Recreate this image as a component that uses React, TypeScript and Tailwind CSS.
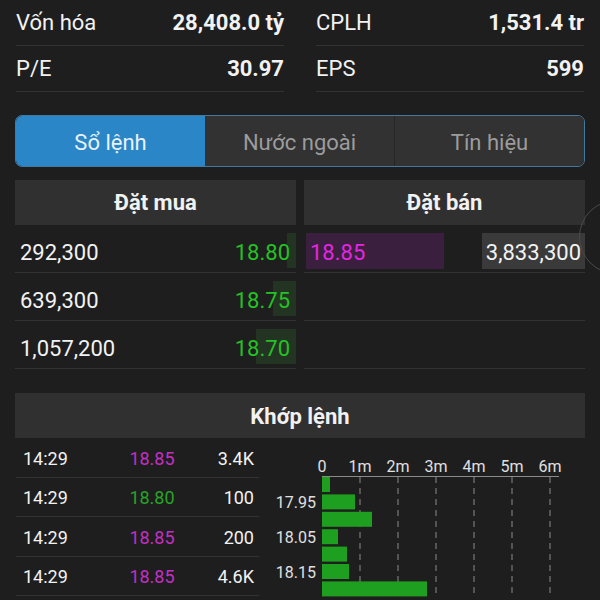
import React from "react";

const STATS = [
  [
    { label: "Vốn hóa", value: "28,408.0 tỷ" },
    { label: "CPLH", value: "1,531.4 tr" },
  ],
  [
    { label: "P/E", value: "30.97" },
    { label: "EPS", value: "599" },
  ],
];

const BUYS = [
  { vol: "292,300", price: "18.80", bar: "w-[9px]" },
  { vol: "639,300", price: "18.75", bar: "w-[23px]" },
  { vol: "1,057,200", price: "18.70", bar: "w-[40px]" },
];

const TRADES = [
  { time: "14:29", price: "18.85", vol: "3.4K", up: true },
  { time: "14:29", price: "18.80", vol: "100", up: false },
  { time: "14:29", price: "18.85", vol: "200", up: true },
  { time: "14:29", price: "18.85", vol: "4.6K", up: true },
];

const BARS = [8, 33, 50, 16, 25, 27, 105, 60];
const TICKS = ["0", "1m", "2m", "3m", "4m", "5m", "6m"];

const VolumeChart = () => (
  <svg width="324" height="160" viewBox="0 0 324 160" className="block">
    {TICKS.map((t, i) => (
      <text
        key={t}
        x={63 + i * 38}
        y={34}
        fill="#e0e0e0"
        fontSize="16"
        textAnchor="middle"
        fontFamily="Roboto, sans-serif"
      >
        {t}
      </text>
    ))}
    <line x1="63" y1="38.5" x2="300" y2="38.5" stroke="#8a8a8a" strokeWidth="1" />
    {TICKS.slice(1).map((t, i) => (
      <line
        key={t}
        x1={101 + i * 38}
        y1="39"
        x2={101 + i * 38}
        y2="160"
        stroke="#8a8a8a"
        strokeWidth="1"
        strokeDasharray="6 5"
      />
    ))}
    {BARS.map((w, i) => (
      <rect key={i} x="63" y={39 + i * 17.4} width={w} height="15" fill="#1f9f1f" />
    ))}
    {["17.95", "18.05", "18.15"].map((l, i) => (
      <text
        key={l}
        x="57"
        y={70 + i * 34.8}
        fill="#e0e0e0"
        fontSize="16"
        textAnchor="end"
        fontFamily="Roboto, sans-serif"
      >
        {l}
      </text>
    ))}
  </svg>
);

const App = () => {
  return (
    <div className="relative w-[600px] h-[600px] overflow-hidden bg-[#1e1e1e] text-[#f2f2f2] font-['Roboto',sans-serif]">
      {/* stats */}
      <section className="flex flex-col px-[16px]">
        {STATS.map((row, r) => (
          <div key={r} className="grid grid-cols-2 gap-x-[32px]">
            {row.map((s) => (
              <div
                key={s.label}
                className="flex h-[46px] items-center justify-between border-b border-[#333333] pb-[1px] text-[22px]"
              >
                <span>{s.label}</span>
                <span className="font-bold">{s.value}</span>
              </div>
            ))}
          </div>
        ))}
      </section>

      {/* tabs */}
      <nav className="mx-[15px] mt-[23px] flex h-[52px] overflow-hidden rounded-[7px] border border-[#44799f] text-[22px]">
        <div className="flex flex-1 items-center justify-center bg-[#2a86c6] pt-[2px] text-[#e8f2fa]">
          Sổ lệnh
        </div>
        <div className="flex flex-1 items-center justify-center border-r border-[#262626] bg-[#323232] pt-[2px] text-[#9c9c9c]">
          Nước ngoài
        </div>
        <div className="flex flex-1 items-center justify-center bg-[#323232] pt-[2px] text-[#9c9c9c]">
          Tín hiệu
        </div>
      </nav>

      {/* order book */}
      <section className="mx-[15px] mt-[13px] grid grid-cols-2 gap-x-[8px] text-[22px]">
        <div>
          <div className="flex h-[45px] items-center justify-center bg-[#303030] font-bold">
            Đặt mua
          </div>
          {BUYS.map((b) => (
            <div
              key={b.price}
              className="relative flex h-[48px] items-center justify-between border-b border-[#333333] pt-[9px] pb-[1px] pl-[5px] pr-[6px]"
            >
              <div className={`absolute right-0 top-[8px] bottom-[4px] bg-[#233423] ${b.bar}`} />
              <span className="relative">{b.vol}</span>
              <span className="relative text-[#24c224]">{b.price}</span>
            </div>
          ))}
        </div>
        <div>
          <div className="flex h-[45px] items-center justify-center bg-[#303030] font-bold">
            Đặt bán
          </div>
          <div className="flex h-[48px] items-center justify-between border-b border-[#333333] pt-[6px] pb-[2px] pl-[2px]">
            <span className="flex h-[36px] w-[138px] items-center bg-[#3b1f3e] pt-[3px] pl-[4px] text-[#e326e3]">
              18.85
            </span>
            <span className="flex h-[36px] w-[103px] items-center justify-end bg-[#3a3a3a] pt-[3px] pr-[4px]">
              3,833,300
            </span>
          </div>
          <div className="h-[48px] border-b border-[#333333]" />
          <div className="h-[48px] border-b border-[#333333]" />
        </div>
      </section>

      {/* matched */}
      <section className="mx-[15px] mt-[24px]">
        <div className="flex h-[45px] items-center justify-center bg-[#303030] pt-[1px] text-[22px] font-bold">
          Khớp lệnh
        </div>
        <div className="flex">
          <div className="w-[244px] pl-[1px]">
            {TRADES.map((t, i) => (
              <div
                key={i}
                className="flex h-[39.5px] items-center border-b border-[#333333] pt-[2px] pl-[7px] pr-[5px] text-[18px]"
              >
                <span className="w-[100px]">{t.time}</span>
                <span
                  className={`w-[58px] text-center ${t.up ? "text-[#c32fc3]" : "text-[#27a327]"}`}
                >
                  {t.price}
                </span>
                <span className="flex-1 text-right">{t.vol}</span>
              </div>
            ))}
          </div>
          <VolumeChart />
        </div>
      </section>

      {/* floating scroll handle */}
      <div className="absolute left-[579px] top-[200px] h-[74px] w-[74px] rounded-full border border-[#4a4a4a]" />
    </div>
  );
};

export default App;
